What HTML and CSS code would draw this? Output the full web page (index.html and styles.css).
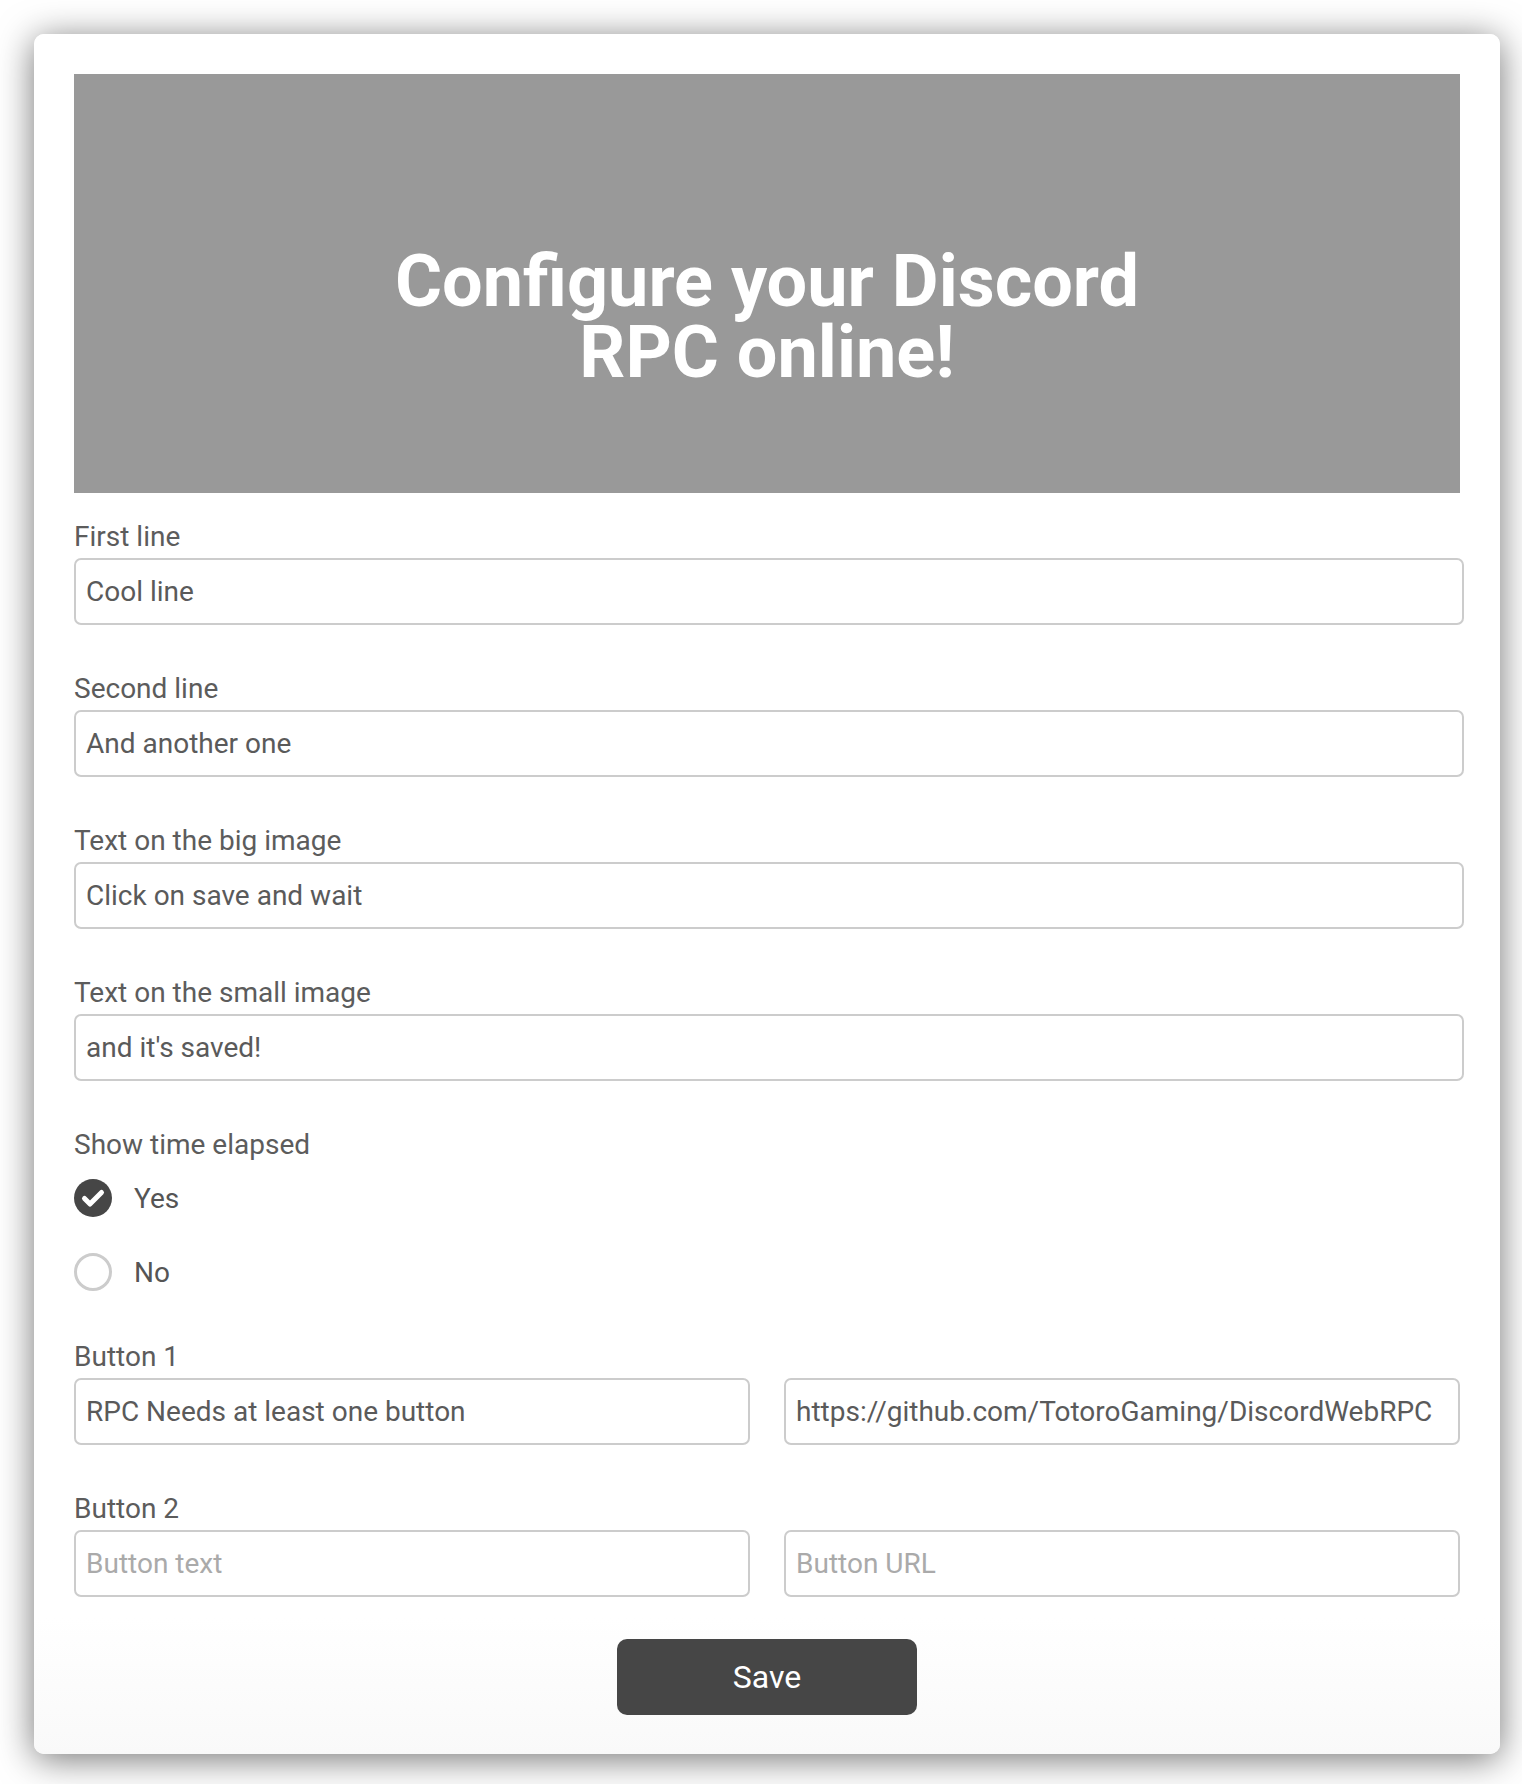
FILE: index.html
```html
<!DOCTYPE html>
<html lang="en">
<head>
<meta charset="utf-8">
<title>Discord Web RPC</title>
<link rel="stylesheet" href="styles.css">
</head>
<body>
<main class="card">
  <header class="hero">
    <h1 class="hero-title">Configure your Discord RPC online!</h1>
  </header>
  <form class="form">
    <div class="field">
      <label class="label">First line</label>
      <input class="input input-wide" type="text" value="Cool line">
    </div>
    <div class="field">
      <label class="label">Second line</label>
      <input class="input input-wide" type="text" value="And another one">
    </div>
    <div class="field">
      <label class="label">Text on the big image</label>
      <input class="input input-wide" type="text" value="Click on save and wait">
    </div>
    <div class="field">
      <label class="label">Text on the small image</label>
      <input class="input input-wide" type="text" value="and it's saved!">
    </div>
    <div class="field">
      <span class="label">Show time elapsed</span>
      <div class="radios">
        <div class="radio-row">
          <span class="radio radio-checked">
            <svg viewBox="0 0 38 38" width="38" height="38"><path d="M10.5 19.5 L16 25 L27.5 13.5" fill="none" stroke="#fff" stroke-width="5" stroke-linecap="round" stroke-linejoin="round"/></svg>
          </span>
          <span class="radio-text">Yes</span>
        </div>
        <div class="radio-row">
          <span class="radio radio-empty"></span>
          <span class="radio-text">No</span>
        </div>
      </div>
    </div>
    <div class="field">
      <label class="label">Button 1</label>
      <div class="pair">
        <input class="input" type="text" value="RPC Needs at least one button">
        <input class="input" type="text" value="https://github.com/TotoroGaming/DiscordWebRPC">
      </div>
    </div>
    <div class="field">
      <label class="label">Button 2</label>
      <div class="pair">
        <input class="input" type="text" placeholder="Button text">
        <input class="input" type="text" placeholder="Button URL">
      </div>
    </div>
    <div class="actions">
      <button class="save" type="button">Save</button>
    </div>
  </form>
</main>
</body>
</html>
```

FILE: styles.css
```css
html, body {
  margin: 0;
  padding: 0;
  background: #ffffff;
}

body {
  padding: 34px 22px 31px 34px;
  font-family: Roboto, "Liberation Sans", sans-serif;
  color: #555555;
}

.card {
  width: 1466px;
  box-sizing: border-box;
  padding: 40px 40px 39px 40px;
  background: linear-gradient(#ffffff 92%, #f9f9f9 100%);
  border-radius: 10px;
  box-shadow: 0 5px 36px rgba(0, 0, 0, 0.55);
}

.hero {
  height: 419px;
  background: #999999;
  display: flex;
  align-items: center;
  justify-content: center;
  box-sizing: border-box;
  padding-top: 66px;
}

.hero-title {
  margin: 0;
  max-width: 800px;
  text-align: center;
  color: #ffffff;
  font-family: Roboto, "Liberation Sans", sans-serif;
  font-weight: 700;
  font-size: 72px;
  line-height: 71px;
}

.form {
  display: flex;
  flex-direction: column;
  gap: 47px;
  padding-top: 27px;
}

.field {
  display: flex;
  flex-direction: column;
}

.label {
  display: block;
  font-size: 28px;
  line-height: 33px;
  color: #5c5c5c;
  margin-bottom: 5px;
}

.input {
  display: block;
  box-sizing: border-box;
  height: 67px;
  width: 100%;
  margin: 0;
  padding: 0 10px;
  border: 2px solid #cccccc;
  border-radius: 7px;
  background: #ffffff;
  font-family: Roboto, "Liberation Sans", sans-serif;
  font-size: 28px;
  color: #5a5a5a;
  outline: none;
}

.input::placeholder {
  color: #aaaaaa;
}

.input-wide {
  width: calc(100% + 4px);
}

.pair {
  display: grid;
  grid-template-columns: 1fr 1fr;
  gap: 34px;
}

.radios {
  display: flex;
  flex-direction: column;
  gap: 36px;
  padding-top: 13px;
  padding-bottom: 2px;
}

.radio-row {
  display: flex;
  align-items: center;
  gap: 22px;
  height: 38px;
}

.radio {
  width: 38px;
  height: 38px;
  border-radius: 50%;
  box-sizing: border-box;
  flex: none;
  display: flex;
}

.radio-checked {
  background: #464646;
}

.radio-empty {
  border: 3px solid #cccccc;
  background: #ffffff;
}

.radio-text {
  font-size: 28px;
  color: #555555;
}

.actions {
  display: flex;
  justify-content: center;
  margin-top: -5px;
}

.save {
  width: 300px;
  height: 76px;
  border: none;
  border-radius: 10px;
  background: #464646;
  color: #ffffff;
  font-family: Roboto, "Liberation Sans", sans-serif;
  font-size: 32px;
  font-weight: 400;
  cursor: pointer;
}
```
